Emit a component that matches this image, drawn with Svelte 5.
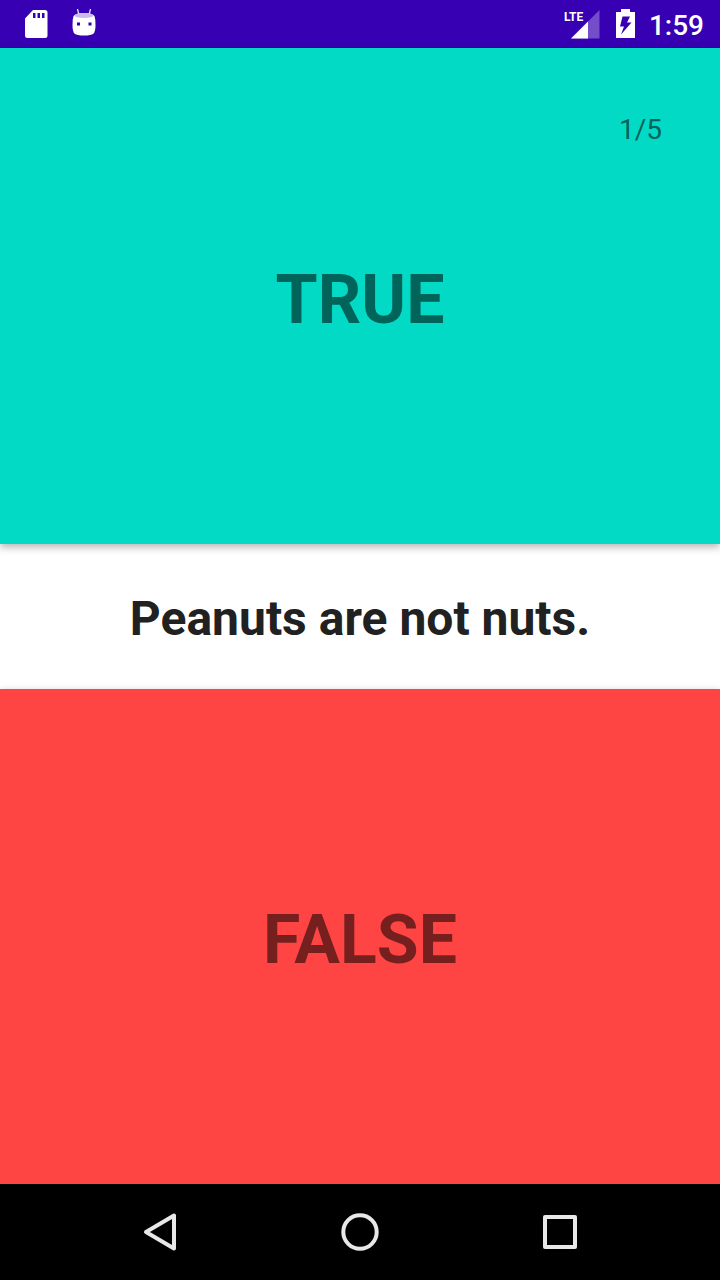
<script>
  const questions = [{ text: 'Peanuts are not nuts.', answer: true }];
  const total = 5;
  let index = $state(0);
  let current = $derived(questions[index % questions.length]);

  function choose() {
    if (index < total - 1) index += 1;
  }
</script>

<div class="screen">
  <header class="status">
    <div class="group notices">
      <svg width="24" height="30" viewBox="0 0 24 30" role="img" aria-label="SD card">
        <path fill="#fff" fill-rule="evenodd" d="M9 1H21Q23.500 1 23.500 3.500V26.500Q23.500 29 21 29H3.500Q1 29 1 26.500V9.500ZM9 4V9H11.500V4ZM13.500 4V9H16V4ZM18 4V9H20.500V4Z" />
      </svg>
      <svg width="24" height="30" viewBox="0 0 24 30" role="img" aria-label="Debugging">
        <path d="M5.500 0L7 6M18.500 0L17 6" stroke="#e6dff5" stroke-width="1.300" />
        <path fill="#fff" d="M1.500 7Q.5 10 .5 16Q.5 22.500 2.500 24.500Q5 26.500 12 26.500Q19 26.500 21.500 24.500Q23.500 22.500 23.500 16Q23.500 10 22.500 7Q20 4 12 4Q4 4 1.500 7Z" />
        <ellipse cx="12" cy="6.500" rx="9.500" ry="2.500" fill="#c9baec" />
        <path fill="#3700b3" d="M5 13.500H8V16.500H5ZM16.500 13.500H19.500V16.500H16.500Z" />
      </svg>
    </div>
    <div class="group system">
      <div class="signal">
        <svg width="36" height="30" viewBox="0 0 36 30" aria-hidden="true">
          <path fill="#fff" fill-opacity=".3" d="M35.500 1V29.500H7Z" />
          <path fill="#fff" d="M24 12.500V29.500H7Z" />
        </svg>
        <span class="network">LTE</span>
      </div>
      <svg width="19" height="30" viewBox="0 0 19 30" role="img" aria-label="Battery charging">
        <path fill="#fff" d="M5 0H14V3H19V29H0V3H5Z" />
        <path fill="#3700b3" d="M6.500 7.500H14L11 13.500H15.500L5 25.500L8 17.500H4Z" />
      </svg>
      <time>1:59</time>
    </div>
  </header>

  <main>
    <button class="answer yes" onclick={choose}>
      <span class="count">{index + 1}/{total}</span>
      <span>TRUE</span>
    </button>
    <h1>{current.text}</h1>
    <button class="answer no" onclick={choose}>FALSE</button>
  </main>

  <nav>
    <button aria-label="Back">
      <svg width="40" height="40" viewBox="0 0 40 40"><path d="M34 3.500V36.500L6 20Z" /></svg>
    </button>
    <button aria-label="Home">
      <svg width="40" height="40" viewBox="0 0 40 40"><circle cx="20" cy="20" r="16.700" /></svg>
    </button>
    <button aria-label="Recent apps">
      <svg width="40" height="40" viewBox="0 0 40 40"><rect x="5" y="5" width="30" height="30" /></svg>
    </button>
  </nav>
</div>

<style>
  :global(body) {
    margin: 0;
  }

  .screen {
    display: flex;
    flex-direction: column;
    min-height: 100vh;
    font-family: Roboto, sans-serif;
    background: #fff;
  }

  svg {
    display: block;
  }

  button {
    border: 0;
    padding: 0;
    font: inherit;
    cursor: pointer;
  }

  .status {
    display: flex;
    justify-content: space-between;
    box-sizing: border-box;
    height: 48px;
    padding: 0 16px 0 24px;
    color: #fff;
    background: #3700b3;
  }

  .group {
    display: flex;
    align-items: center;
  }

  .notices {
    gap: 24px;
  }

  .system {
    gap: 16px;
  }

  .signal {
    position: relative;
  }

  .network {
    position: absolute;
    top: 1px;
    left: 0;
    font: 700 12px/14px Roboto, sans-serif;
  }

  time {
    margin-left: -2px;
    font-size: 28px;
    font-weight: 500;
    line-height: 32px;
    padding-top: 4px;
  }

  main {
    flex: 1;
    display: grid;
    grid-template-rows: 1fr auto 1fr;
  }

  .answer {
    position: relative;
    padding-top: 8px;
    font-size: 68px;
    font-weight: 700;
    line-height: 80px;
  }

  .yes {
    color: #01645a;
    background: #03dac6;
    box-shadow: 0 3px 8px rgba(0, 0, 0, 0.3);
  }

  .no {
    color: #751f1f;
    background: #ff4444;
    box-shadow: 0 3px 8px rgba(0, 0, 0, 0.3);
  }

  .count {
    position: absolute;
    top: 65px;
    right: 58px;
    font-size: 28px;
    font-weight: 400;
    line-height: 34px;
  }

  h1 {
    margin: 0;
    padding: 46px 24px 42px;
    font-size: 48px;
    font-weight: 700;
    line-height: 57px;
    text-align: center;
    color: #212121;
  }

  nav {
    display: grid;
    grid-template-columns: repeat(3, 1fr);
    height: 96px;
    padding: 0 8.333%;
    background: #000;
    position: relative;
  }

  nav button {
    display: grid;
    place-items: center;
    background: none;
  }

  nav svg {
    fill: none;
    stroke: #e8e8e8;
    stroke-width: 4;
    stroke-linejoin: round;
  }
</style>
